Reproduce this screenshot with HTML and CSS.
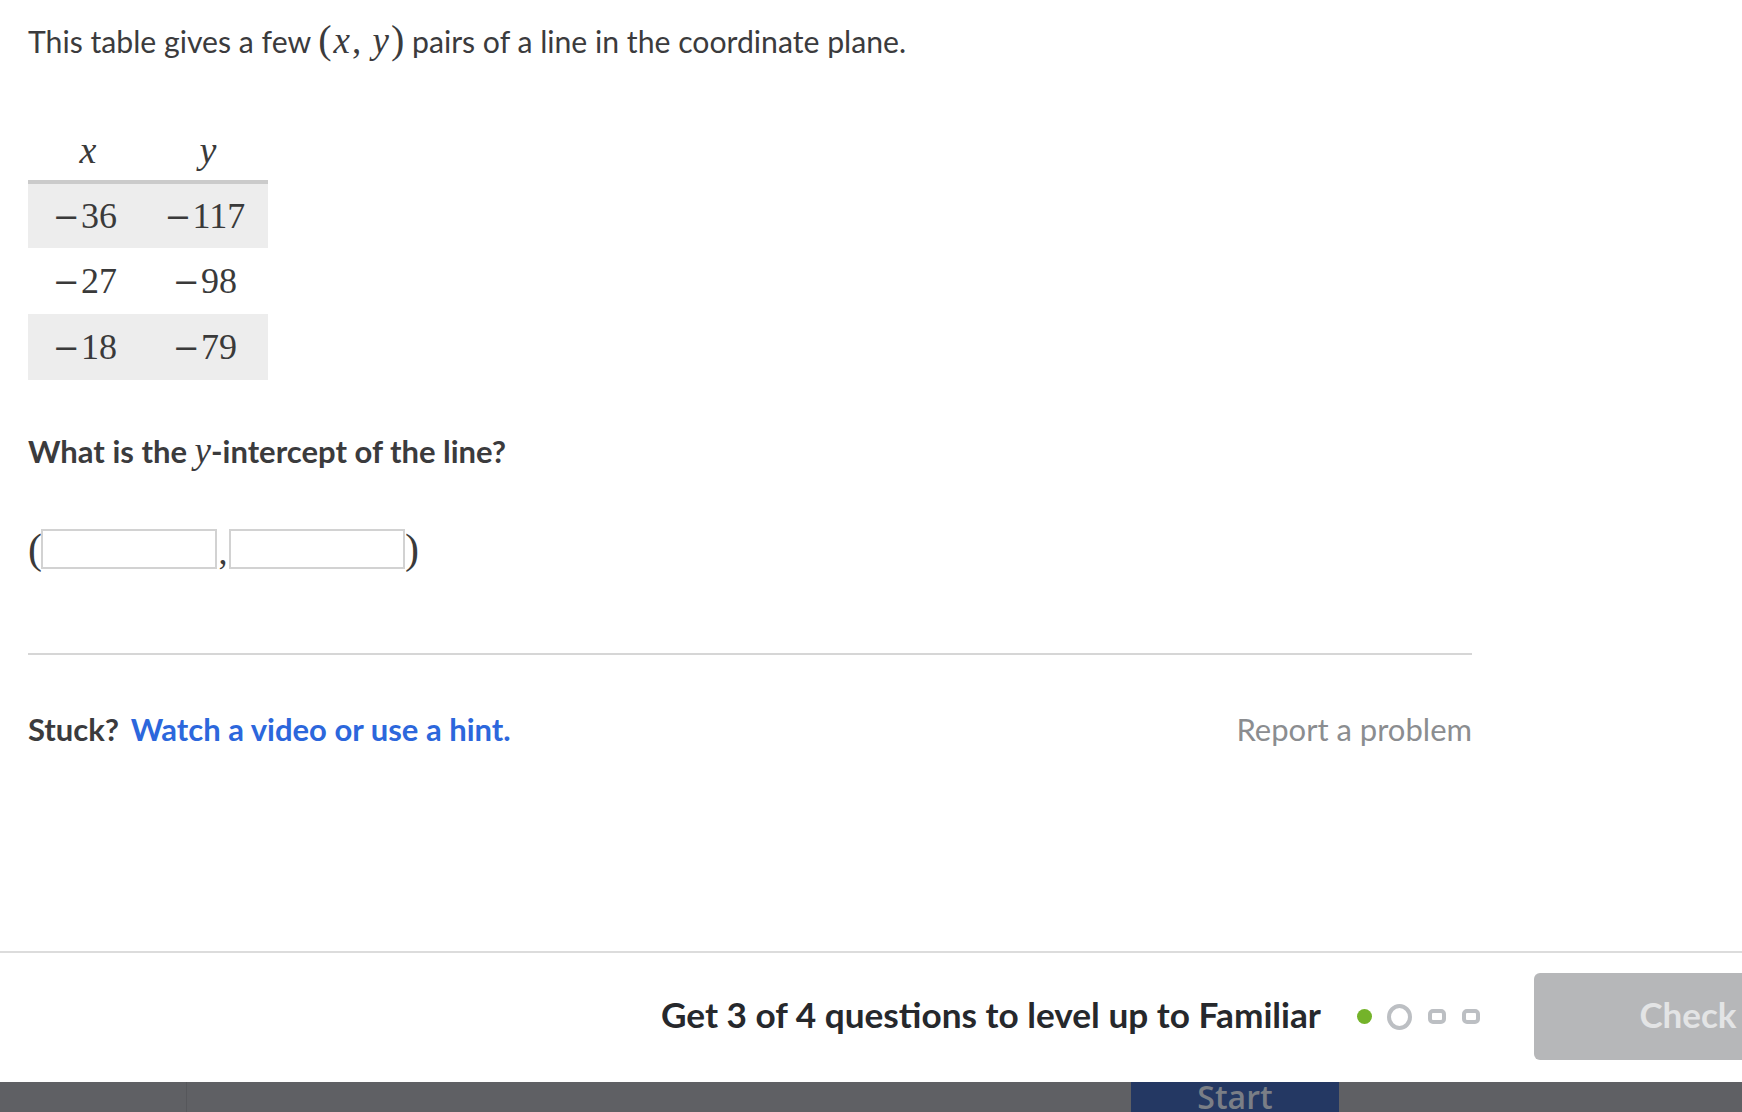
FILE: index.html
```html
<!DOCTYPE html>
<html lang="en">
<head>
<meta charset="utf-8">
<title>y-intercept from a table</title>
<link rel="stylesheet" href="styles.css">
</head>
<body>
<div class="page">
  <main class="content">
    <p class="intro">This table gives a few <span class="math"><span class="paren">(</span><i>x</i>, <i>y</i><span class="paren">)</span></span> pairs of a line in the coordinate plane.</p>

    <table class="values">
      <thead>
        <tr><th><i>x</i></th><th><i>y</i></th></tr>
      </thead>
      <tbody>
        <tr class="shaded"><td><span class="neg">−</span>36</td><td><span class="neg">−</span>117</td></tr>
        <tr><td><span class="neg">−</span>27</td><td><span class="neg">−</span>98</td></tr>
        <tr class="shaded"><td><span class="neg">−</span>18</td><td><span class="neg">−</span>79</td></tr>
      </tbody>
    </table>

    <p class="question">What is the <i class="mvar">y</i>-intercept of the line?</p>

    <div class="answer">
      <span class="bracket">(</span>
      <input class="field" type="text" aria-label="x coordinate">
      <span class="comma">,</span>
      <input class="field" type="text" aria-label="y coordinate">
      <span class="bracket">)</span>
    </div>

    <hr class="rule">

    <div class="help">
      <p class="stuck">Stuck? <a class="hint" href="#">Watch a video or use a hint.</a></p>
      <a class="report" href="#">Report a problem</a>
    </div>
  </main>

  <footer class="footer">
    <span class="goal">Get 3 of 4 questions to level up to Familiar</span>
    <span class="dots">
      <span class="dot done"></span>
      <span class="dot current"></span>
      <span class="dot todo"></span>
      <span class="dot todo"></span>
    </span>
    <button class="check" type="button" disabled>Check</button>
  </footer>

  <div class="taskbar">
    <span class="tb-left"></span>
    <span class="tb-mid"></span>
    <span class="tb-start">Start</span>
    <span class="tb-right"></span>
  </div>
</div>
</body>
</html>
```

FILE: styles.css
```css
* { box-sizing: border-box; }

html, body {
  margin: 0;
  padding: 0;
  background: #ffffff;
}

body {
  width: 1742px;
  height: 1112px;
  overflow: hidden;
  font-family: Lato, "Open Sans", "Liberation Sans", sans-serif;
  color: #3b3b3d;
}

.page {
  height: 1112px;
  display: flex;
  flex-direction: column;
}

.content {
  flex: 1;
  padding: 18px 0 0 28px;
  width: 1472px;
}

.intro {
  margin: 0;
  font-size: 30.2px;
  line-height: 44px;
}

.math {
  font-family: "Liberation Serif", "DejaVu Serif", serif;
  font-size: 37px;
}

.math i, .mvar, .values th i {
  font-family: "Liberation Serif", "DejaVu Serif", serif;
  font-style: italic;
}

.math i {
  margin: 0 2px;
}

.paren {
  font-size: 40px;
}

.values {
  margin-top: 57px;
  border-collapse: collapse;
  font-family: "Liberation Serif", "DejaVu Serif", serif;
  font-size: 36px;
  color: #3a3a3a;
}

.values th {
  width: 120px;
  height: 62px;
  font-size: 38px;
  font-weight: normal;
  text-align: center;
  padding: 0;
  border-bottom: 4px solid #cbcbcb;
  vertical-align: middle;
}

.values td {
  width: 120px;
  height: 66px;
  text-align: center;
  padding: 0 6px 0 0;
  vertical-align: middle;
}

.values tr.shaded td {
  background: #ededed;
}

.neg {
  font-family: "DejaVu Serif", "Liberation Serif", serif;
  font-size: 32px;
  margin-right: 1px;
}

.question {
  margin: 49px 0 0;
  font-size: 31px;
  line-height: 44px;
  font-weight: bold;
  color: #3b3b3d;
}

.mvar {
  font-weight: normal;
  font-size: 37px;
}

.answer {
  margin-top: 56px;
  display: flex;
  align-items: center;
  height: 40px;
}

.bracket {
  font-family: "Liberation Serif", "DejaVu Serif", serif;
  font-size: 42px;
  line-height: 40px;
  color: #3a3a3a;
  width: 13px;
}

.field {
  width: 176px;
  height: 40px;
  border: 2px solid #d2d2d2;
  margin: 0;
  padding: 0;
  background: #fff;
}

.comma {
  font-family: "Liberation Serif", serif;
  font-size: 36px;
  line-height: 40px;
  width: 12px;
  text-align: center;
  padding-top: 6px;
  color: #3a3a3a;
}

.rule {
  margin: 84px 0 0;
  border: 0;
  border-top: 2px solid #d6d6d6;
  height: 0;
}

.help {
  margin-top: 52px;
  display: flex;
  justify-content: space-between;
  align-items: center;
}

.stuck {
  margin: 0;
  font-size: 31px;
  line-height: 44px;
  font-weight: bold;
  color: #3b3b3d;
}

.hint {
  color: #2c67dc;
  text-decoration: none;
  margin-left: 4px;
}

.report {
  font-size: 31px;
  line-height: 44px;
  color: #8b8d90;
  text-decoration: none;
}

.footer {
  height: 131px;
  flex: none;
  border-top: 2px solid #dcdcdc;
  display: flex;
  align-items: center;
  justify-content: flex-end;
  margin-right: -100px;
}

.goal {
  font-size: 35.2px;
  line-height: 44px;
  padding-bottom: 8px;
  font-weight: bold;
  color: #26282c;
}

.dots {
  display: flex;
  align-items: center;
  margin-left: 36px;
  padding-bottom: 2px;
}

.dot {
  display: block;
}

.dot.done {
  width: 15px;
  height: 15px;
  border-radius: 50%;
  background: #74b32a;
}

.dot.current {
  width: 25px;
  height: 26px;
  border-radius: 50%;
  border: 4px solid #bcbfc3;
  margin-left: 15px;
}

.dot.todo {
  width: 18px;
  height: 15px;
  border-radius: 5px;
  border: 4px solid #bcbfc3;
  margin-left: 16px;
}

.check {
  margin-left: 54px;
  margin-bottom: 2px;
  width: 308px;
  height: 87px;
  border: 0;
  border-radius: 6px;
  background: #b6b7b9;
  color: #e3e4e5;
  font-family: Lato, "Open Sans", sans-serif;
  font-size: 35px;
  font-weight: bold;
  padding: 0 0 6px;
}

.taskbar {
  height: 30px;
  flex: none;
  display: flex;
  background: #5f6064;
  overflow: hidden;
}

.tb-left {
  width: 187px;
  border-right: 1px solid #56575b;
}

.tb-mid {
  width: 944px;
}

.tb-start {
  width: 208px;
  background: #243863;
  color: #7a7e86;
  font-family: "Open Sans", "Noto Sans", sans-serif;
  font-weight: 600;
  font-size: 32px;
  line-height: 30px;
  text-align: center;
  padding-top: 0;
}

.tb-right {
  flex: 1;
}
```
